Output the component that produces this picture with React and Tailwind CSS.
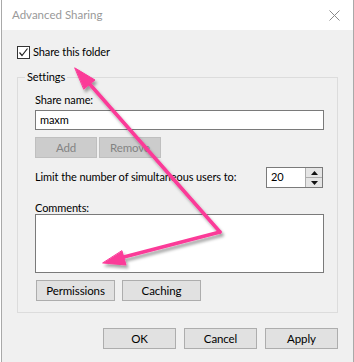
import React from 'react';

const font = { fontFamily: 'Lato, "Segoe UI", sans-serif' };

function WinButton({ children, disabled, className = '' }) {
    return (
        <button
            type="button"
            disabled={disabled}
            className={
                'h-[21px] flex items-center justify-center text-[11.5px] leading-none border ' +
                (disabled
                    ? 'bg-[#cccccc] border-[#bfbfbf] text-[#838383] '
                    : 'bg-[#e1e1e1] border-[#adadad] text-black ') +
                className
            }
        >
            {children}
        </button>
    );
}

function Arrows() {
    return (
        <svg className="absolute inset-0 pointer-events-none" width="354" height="362" viewBox="0 0 354 362">
            <defs>
                <filter id="shadow" x="-20%" y="-20%" width="140%" height="140%">
                    <feDropShadow dx="2" dy="3" stdDeviation="1.6" floodColor="#000" floodOpacity="0.35" />
                </filter>
            </defs>
            <g filter="url(#shadow)" fill="#fb3a98" stroke="#fb3a98" strokeLinecap="round" strokeLinejoin="round">
                {/* up arrow to the checkbox */}
                <line x1="220" y1="232" x2="87" y2="81" strokeWidth="3.5" />
                <polygon points="75,68 95,80 84,89" strokeWidth="1" />
                {/* down arrow to permissions */}
                <line x1="220" y1="232" x2="120" y2="258" strokeWidth="3.5" />
                <polygon points="103,263 126,265 122,251" strokeWidth="1" />
            </g>
        </svg>
    );
}

export default function App() {
    return (
        <div className="relative w-[354px] h-[362px] bg-white overflow-hidden" style={font}>
            <div className="ml-[1px] w-[353px] h-full flex flex-col border-l border-r border-[#a9a9a9]">
                {/* title bar */}
                <div className="h-[30px] shrink-0 bg-white flex items-center justify-between pl-[10px] pr-[10px]">
                    <span className="text-[11.5px] text-[#999999]">Advanced Sharing</span>
                    <svg width="11" height="11" viewBox="0 0 11 11" className="mr-[3px]">
                        <path d="M0.5 0.5 L10.5 10.5 M10.5 0.5 L0.5 10.5" stroke="#8a8a8a" strokeWidth="1" />
                    </svg>
                </div>

                {/* body */}
                <div className="flex-1 bg-[#f0f0f0] pl-[15px] pt-[16px] text-[11px] tracking-[-0.1px]">
                    <label className="flex items-center gap-[3px] h-[13px] text-black">
                        <span className="w-[13px] h-[13px] border border-[#333333] bg-white flex items-center justify-center">
                            <svg width="11" height="11" viewBox="0 0 11 11">
                                <path d="M1.5 5.5 L4 8.5 L9.5 1.5" fill="none" stroke="#222" strokeWidth="1.2" />
                            </svg>
                        </span>
                        Share this folder
                    </label>

                    {/* Settings group */}
                    <div className="relative mt-[18px] w-[321px] h-[236px] border border-[#dcdcdc] pl-[17px] pr-[13px] pt-[14px]">
                        <span className="absolute left-[7px] -top-[9px] px-[2px] bg-[#f0f0f0] leading-[16px] text-black">
                            Settings
                        </span>

                        <div className="leading-[16px] text-black">Share name:</div>
                        <div className="mt-[2px] h-[20px] border border-[#7a7a7a] bg-white flex items-center px-[4px] text-black">
                            maxm
                        </div>

                        <div className="mt-[7px] flex gap-[2px]">
                            <WinButton disabled className="w-[62px]">Add</WinButton>
                            <WinButton disabled className="w-[62px]">Remove</WinButton>
                        </div>

                        <div className="mt-[9px] flex items-center justify-between">
                            <span className="whitespace-nowrap text-black">Limit the number of simultaneous users to:</span>
                            <div className="flex h-[21px] border border-[#7a7a7a] bg-white mr-[1px]">
                                <div className="w-[38px] flex items-center pl-[4px] text-black">20</div>
                                <div className="w-[17px] flex flex-col border-l border-[#adadad]">
                                    <div className="flex-1 flex items-center justify-center bg-[#e5e5e5] border-b border-[#adadad]">
                                        <svg width="7" height="4" viewBox="0 0 7 4"><path d="M0 4 L3.5 0 L7 4 Z" fill="#111" /></svg>
                                    </div>
                                    <div className="flex-1 flex items-center justify-center bg-[#e5e5e5]">
                                        <svg width="7" height="4" viewBox="0 0 7 4"><path d="M0 0 L3.5 4 L7 0 Z" fill="#111" /></svg>
                                    </div>
                                </div>
                            </div>
                        </div>

                        <div className="mt-[12px] leading-[16px] text-black">Comments:</div>
                        <div className="mt-[-2px] h-[59px] border border-[#7a7a7a] bg-white" />

                        <div className="mt-[7px] flex gap-[7px] ml-[1px]">
                            <WinButton className="w-[79px]">Permissions</WinButton>
                            <WinButton className="w-[79px]">Caching</WinButton>
                        </div>
                    </div>

                    {/* dialog buttons */}
                    <div className="mt-[15px] flex justify-end gap-[8px] pr-[15px]">
                        <WinButton className="w-[73px]">OK</WinButton>
                        <WinButton className="w-[73px]">Cancel</WinButton>
                        <WinButton className="w-[73px]">Apply</WinButton>
                    </div>
                </div>
            </div>
            <Arrows />
        </div>
    );
}
